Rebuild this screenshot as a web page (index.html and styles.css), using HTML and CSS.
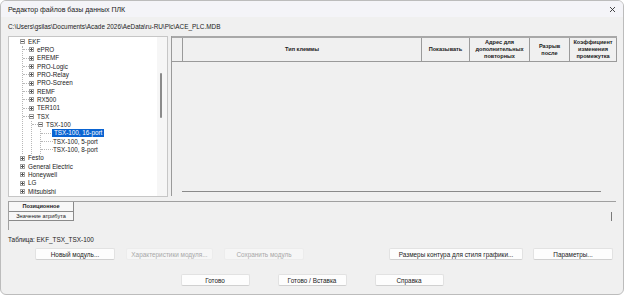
FILE: index.html
```html
<!DOCTYPE html>
<html lang="ru">
<head>
    <meta charset="UTF-8">
    <title>Редактор файлов базы данных ПЛК</title>
    <link rel="stylesheet" href="styles.css">
</head>
<body>
<div class="window">
    <div class="titlebar">
        <span>Редактор файлов базы данных ПЛК</span>
        <svg class="close" width="7" height="7" viewBox="0 0 7 7">
            <path d="M1 1 L6 6 M6 1 L1 6" stroke="#333" stroke-width="0.9" fill="none"/>
        </svg>
    </div>
    <div class="path">C:\Users\gsilas\Documents\Acade 2026\AeData\ru-RU\Plc\ACE_PLC.MDB</div>

    <div class="main">
        <div class="tree">
            <ul class="root">
                <li><div class="row"><span class="box minus"></span><span class="label">EKF</span></div>
                    <ul>
                        <li><div class="row"><span class="hl"></span><span class="box plus"></span><span class="label">ePRO</span></div></li>
                        <li><div class="row"><span class="hl"></span><span class="box plus"></span><span class="label">EREMF</span></div></li>
                        <li><div class="row"><span class="hl"></span><span class="box plus"></span><span class="label">PRO-Logic</span></div></li>
                        <li><div class="row"><span class="hl"></span><span class="box plus"></span><span class="label">PRO-Relay</span></div></li>
                        <li><div class="row"><span class="hl"></span><span class="box plus"></span><span class="label">PRO-Screen</span></div></li>
                        <li><div class="row"><span class="hl"></span><span class="box plus"></span><span class="label">REMF</span></div></li>
                        <li><div class="row"><span class="hl"></span><span class="box plus"></span><span class="label">RX500</span></div></li>
                        <li><div class="row"><span class="hl"></span><span class="box plus"></span><span class="label">TER101</span></div></li>
                        <li><div class="row"><span class="hl"></span><span class="box minus"></span><span class="label">TSX</span></div>
                            <ul>
                                <li><div class="row"><span class="hl"></span><span class="box minus"></span><span class="label">TSX-100</span></div>
                                    <ul>
                                        <li><div class="row"><span class="hl leaf"></span><span class="label selected">TSX-100, 16-port</span></div></li>
                                        <li><div class="row"><span class="hl leaf"></span><span class="label">TSX-100, 5-port</span></div></li>
                                        <li><div class="row"><span class="hl leaf"></span><span class="label">TSX-100, 8-port</span></div></li>
                                    </ul>
                                </li>
                            </ul>
                        </li>
                    </ul>
                </li>
                <li><div class="row"><span class="box plus"></span><span class="label">Festo</span></div></li>
                <li><div class="row"><span class="box plus"></span><span class="label">General Electric</span></div></li>
                <li><div class="row"><span class="box plus"></span><span class="label">Honeywell</span></div></li>
                <li><div class="row"><span class="box plus"></span><span class="label">LG</span></div></li>
                <li><div class="row"><span class="box plus"></span><span class="label">Mitsubishi</span></div></li>
            </ul>
            <div class="vscroll"><div class="thumb"></div></div>
        </div>

        <div class="grid">
            <div class="grid-head">
                <div class="cell"></div>
                <div class="cell">Тип клеммы</div>
                <div class="cell">Показывать</div>
                <div class="cell">Адрес для дополнительных повторных</div>
                <div class="cell">Разрыв после</div>
                <div class="cell">Коэффициент изменения промежутка</div>
            </div>
            <div class="grid-body">
                <div class="hscroll"></div>
            </div>
        </div>
    </div>

    <div class="lower">
        <div class="attr">
            <div class="attr-head">Позиционное</div>
            <div class="attr-value">Значение атрибута</div>
        </div>
        <div class="marker"></div>
    </div>

    <div class="table-name">Таблица: EKF_TSX_TSX-100</div>

    <div class="btn-row">
        <div class="btn-group">
            <button class="w80">Новый модуль...</button>
            <button class="w87" disabled>Характеристики модуля...</button>
            <button class="w80" disabled>Сохранить модуль</button>
        </div>
        <div class="btn-group right">
            <button class="w134">Размеры контура для стиля графики...</button>
            <button class="w80">Параметры...</button>
        </div>
    </div>

    <div class="btn-row center">
        <button class="w69">Готово</button>
        <button class="w69">Готово / Вставка</button>
        <button class="w69">Справка</button>
    </div>
</div>
</body>
</html>
```

FILE: styles.css
```css
body {
    margin: 0;
    font-family: "Liberation Sans", Arial, sans-serif;
    color: #1a1a1a;
}

.window {
    width: 624px;
    height: 295px;
    box-sizing: border-box;
    border: 1px solid #bcbcbc;
    border-radius: 6px;
    background-color: #f0f0f0;
    overflow: hidden;
    display: flex;
    flex-direction: column;
}

.titlebar {
    height: 16px;
    padding: 0 7px 0 7px;
    background-color: #f4f4f8;
    display: flex;
    align-items: center;
    justify-content: space-between;
    font-size: 7px;
}

.path {
    height: 19px;
    line-height: 19px;
    padding-left: 7px;
    font-size: 6.4px;
}

/* tree + grid */
.main {
    height: 161px;
    padding-left: 7px;
    display: flex;
    gap: 3px;
}

.tree {
    width: 160px;
    box-sizing: border-box;
    border: 1px solid #c6c6c6;
    background-color: #fff;
    display: flex;
    font-size: 6.3px;
}

.tree ul {
    list-style: none;
    margin: 0;
    padding: 0;
}

.tree .root {
    flex: 1;
    padding-top: 0.5px;
}

.tree .root > li > ul {
    margin-left: 13px;
    border-left: 1px dotted #b8b8b8;
}

.tree ul ul ul {
    margin-left: 8px;
    border-left: 1px dotted #b8b8b8;
}

.row {
    height: 8.33px;
    display: flex;
    align-items: center;
    white-space: nowrap;
}

.root > li > .row {
    padding-left: 11px;
}

.hl {
    width: 6px;
    border-top: 1px dotted #b8b8b8;
}

.hl.leaf {
    width: 12px;
}

.box {
    width: 5px;
    height: 5px;
    box-sizing: border-box;
    border: 1px solid #a0a0a0;
    background-color: #fff;
    position: relative;
    margin-right: 3px;
}

.box::before {
    content: "";
    position: absolute;
    left: 0;
    right: 0;
    top: 1px;
    height: 1px;
    background-color: #555;
}

.box.plus::after {
    content: "";
    position: absolute;
    top: 0;
    bottom: 0;
    left: 1px;
    width: 1px;
    background-color: #555;
}

.label {
    line-height: 8px;
}

.label.selected {
    background-color: #0a64d2;
    color: #fff;
    padding: 0 2px;
    margin-left: -1px;
}

.vscroll {
    width: 10px;
    background-color: #f6f6f6;
    position: relative;
}

.thumb {
    position: absolute;
    left: 3px;
    top: 36px;
    width: 1.5px;
    height: 45px;
    background-color: #8a8a8a;
    border-radius: 1px;
}

.grid {
    width: 446px;
    height: 160px;
    box-sizing: border-box;
    border-left: 1px solid #9a9a9a;
    display: flex;
    flex-direction: column;
}

.grid-head {
    height: 26px;
    box-sizing: border-box;
    border-top: 2px solid #a8a8a8;
    border-bottom: 1px solid #9a9a9a;
    display: grid;
    grid-template-columns: 11px 239px 48px 60px 40px 47px;
    font-size: 5.6px;
    font-weight: bold;
}

.grid-head .cell {
    border-right: 1px solid #9a9a9a;
    display: flex;
    align-items: center;
    justify-content: center;
    text-align: center;
    line-height: 7px;
    overflow: hidden;
}

.grid-body {
    flex: 1;
    display: flex;
    align-items: flex-end;
    padding: 0 16px 4px 10px;
}

.hscroll {
    flex: 1;
    height: 1.5px;
    background-color: #8a8a8a;
}

/* attribute box under the tree */
.lower {
    height: 29px;
    margin: 4px 7px 0 7px;
    box-sizing: border-box;
    border-top: 1px solid #a0a0a0;
    border-left: 1px solid #a0a0a0;
    display: flex;
    justify-content: space-between;
    align-items: flex-start;
}

.attr {
    width: 64px;
    border-right: 1px solid #8a8a8a;
    border-bottom: 1px solid #8a8a8a;
    font-size: 5.6px;
    text-align: center;
    background-color: #f7f7f7;
}

.attr-head {
    height: 9px;
    line-height: 9px;
    font-weight: bold;
    border-bottom: 1px solid #8a8a8a;
}

.attr-value {
    height: 8px;
    line-height: 8px;
}

.marker {
    width: 1px;
    height: 9px;
    margin: 10px 4px 0 0;
    background-color: #7a7a7a;
}

.table-name {
    height: 18px;
    line-height: 19px;
    padding-left: 7px;
    font-size: 6.4px;
}

/* buttons */
.btn-row {
    display: flex;
    padding: 0 10px 0 34px;
}

.btn-row.center {
    justify-content: center;
    gap: 28px;
    padding: 0;
    margin-top: 14px;
}

.btn-group {
    display: flex;
    gap: 11px;
}

.btn-group.right {
    margin-left: auto;
    gap: 10px;
}

button {
    height: 12px;
    padding: 0;
    font-family: "Liberation Sans", Arial, sans-serif;
    font-size: 6.4px;
    color: #1a1a1a;
    background-color: #fdfdfd;
    border: 1px solid #e2e2e2;
    border-bottom-color: #d0d0d0;
    border-radius: 2px;
}

button:disabled {
    color: #a8a8a8;
    background-color: #f6f6f6;
    border-color: #ececec;
}

.w69 { width: 69px; }
.w80 { width: 80px; }
.w87 { width: 87px; }
.w134 { width: 134px; }
```
